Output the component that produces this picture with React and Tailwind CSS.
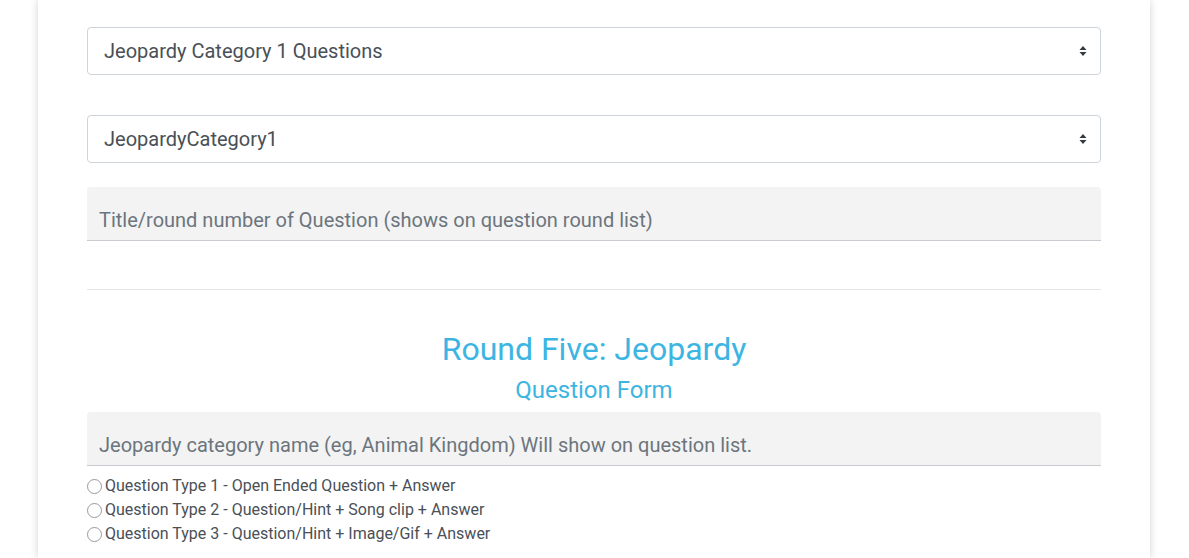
import React from 'react';

const font = { fontFamily: 'Roboto, "Liberation Sans", sans-serif' };

function Arrows() {
    return (
        <svg width="8" height="12" viewBox="0 0 8 12" className="absolute right-[14px] top-1/2 -translate-y-1/2 pointer-events-none">
            <path d="M4 1 L7.5 5 L0.5 5 Z" fill="#343a40" />
            <path d="M4 11 L7.5 7 L0.5 7 Z" fill="#343a40" />
        </svg>
    );
}

function SelectBox({ value }) {
    return (
        <div className="relative h-[48px]">
            <select
                className="block w-full h-[48px] appearance-none bg-white border border-[#ced4da] rounded-[4px] pl-[16px] pr-8 text-[20px] text-[#495057] outline-none"
                defaultValue={value}
            >
                <option>{value}</option>
            </select>
            <Arrows />
        </div>
    );
}

function FilledInput({ placeholder }) {
    return (
        <input
            className="block w-full h-[54px] bg-[#f3f3f3] rounded-t-[4px] border-b border-[#c8ccd0] px-[12px] pt-[13px] text-[20px] text-[#495057] placeholder:text-[#6c757d] outline-none"
            placeholder={placeholder}
        />
    );
}

function Radio({ label }) {
    return (
        <label className="flex items-center h-[24px] text-[16px] text-[#495057]">
            <span className="w-[15px] h-[15px] rounded-full border border-[#9a9a9a] bg-white mr-[3px] shrink-0" />
            {label}
        </label>
    );
}

export default function App() {
    return (
        <div className="min-h-[558px] bg-white overflow-hidden" style={font}>
            <div className="ml-[38px] w-[1112px] min-h-[558px] bg-white shadow-[0_0_8px_rgba(0,0,0,0.18)] px-[49px] pt-[27px]">
                <SelectBox value="Jeopardy Category 1 Questions" />
                <div className="h-[40px]" />
                <SelectBox value="JeopardyCategory1" />
                <div className="h-[24px]" />
                <FilledInput placeholder="Title/round number of Question (shows on question round list)" />
                <div className="h-[48px]" />
                <hr className="border-0 border-t border-[#e5e5e5]" />
                <div className="text-center text-[#3db5e3] mt-[39px]">
                    <h2 className="text-[32px] leading-[40px]">Round Five: Jeopardy</h2>
                    <h3 className="text-[24px] leading-[30px] mt-[6px]">Question Form</h3>
                </div>
                <div className="mt-[7px]">
                    <FilledInput placeholder="Jeopardy category name (eg, Animal Kingdom) Will show on question list." />
                </div>
                <div className="mt-[8px] flex flex-col">
                    <Radio label="Question Type 1 - Open Ended Question + Answer" />
                    <Radio label="Question Type 2 - Question/Hint + Song clip + Answer" />
                    <Radio label="Question Type 3 - Question/Hint + Image/Gif + Answer" />
                </div>
            </div>
        </div>
    );
}
